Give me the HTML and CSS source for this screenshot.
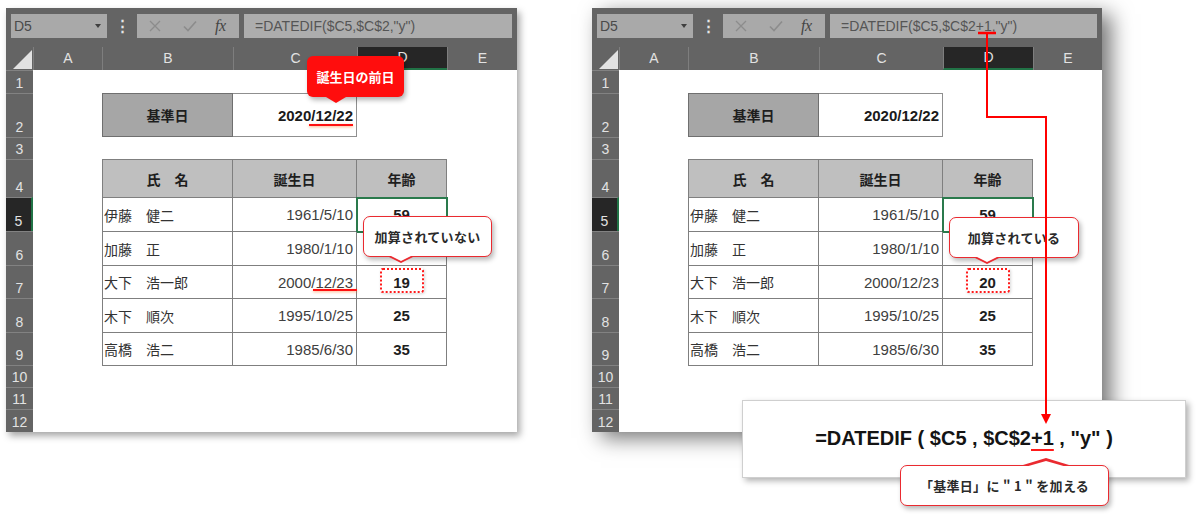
FILE: index.html
```html
<!DOCTYPE html>
<html lang="ja">
<head>
<meta charset="utf-8">
<title>DATEDIF</title>
<link rel="stylesheet" href="styles.css">
</head>
<body>
<div class="page">

  <div class="win left">
    <div class="toolbar">
      <div class="namebox"><span>D5</span><i class="caret"></i></div>
      <div class="dots">⋮</div>
      <div class="fxbtns">
        <svg class="ico-x" width="12" height="12" viewBox="0 0 12 12"><path d="M1 1L11 11M11 1L1 11" stroke="#8c8c8c" stroke-width="1.3" fill="none"/></svg>
        <svg class="ico-ok" width="14" height="12" viewBox="0 0 14 12"><path d="M1 6.5L5 10.5L13 1.5" stroke="#8c8c8c" stroke-width="1.6" fill="none"/></svg>
        <span class="fx">fx</span>
      </div>
      <div class="fbar">=DATEDIF($C5,$C$2,"y")</div>
    </div>
    <div class="colhead">
      <div class="corner"><svg width="19" height="19" viewBox="0 0 19 19"><path d="M19 0V19H0Z" fill="#e2e2e2"/></svg></div>
      <div class="ch ca">A</div>
      <div class="ch cb">B</div>
      <div class="ch cc">C</div>
      <div class="ch cd sel">D</div>
      <div class="ch ce">E</div>
    </div>
    <div class="body">
      <div class="rowheads">
        <div class="rh h23">1</div>
        <div class="rh h44">2</div>
        <div class="rh h22">3</div>
        <div class="rh h38">4</div>
        <div class="rh h34 sel">5</div>
        <div class="rh h34">6</div>
        <div class="rh h33">7</div>
        <div class="rh h34">8</div>
        <div class="rh h33">9</div>
        <div class="rh h22">10</div>
        <div class="rh h22">11</div>
        <div class="rh last">12</div>
      </div>
      <div class="canvas">
        <div class="ref">
          <div class="k">基準日</div>
          <div class="v">2020/12/22</div>
        </div>
        <div class="list">
          <div class="hd">氏　名</div><div class="hd">誕生日</div><div class="hd">年齢</div>
          <div class="nm">伊藤　健二</div><div class="dt">1961/5/10</div><div class="ag cur">59</div>
          <div class="nm">加藤　正</div><div class="dt">1980/1/10</div><div class="ag"></div>
          <div class="nm">大下　浩一郎</div><div class="dt">2000/12/23</div><div class="ag">19</div>
          <div class="nm">木下　順次</div><div class="dt">1995/10/25</div><div class="ag">25</div>
          <div class="nm">高橋　浩二</div><div class="dt">1985/6/30</div><div class="ag">35</div>
        </div>
      </div>
    </div>
    <div class="mark mark-ref"></div>
    <div class="mark mark-dt"></div>
    <div class="dotbox"></div>
    <div class="redtip">誕生日の前日</div>
    <div class="callout c-age">加算されていない</div>
  </div>

  <div class="win right">
    <div class="toolbar">
      <div class="namebox"><span>D5</span><i class="caret"></i></div>
      <div class="dots">⋮</div>
      <div class="fxbtns">
        <svg class="ico-x" width="12" height="12" viewBox="0 0 12 12"><path d="M1 1L11 11M11 1L1 11" stroke="#8c8c8c" stroke-width="1.3" fill="none"/></svg>
        <svg class="ico-ok" width="14" height="12" viewBox="0 0 14 12"><path d="M1 6.5L5 10.5L13 1.5" stroke="#8c8c8c" stroke-width="1.6" fill="none"/></svg>
        <span class="fx">fx</span>
      </div>
      <div class="fbar">=DATEDIF($C5,$C$2+1,"y")</div>
    </div>
    <div class="colhead">
      <div class="corner"><svg width="19" height="19" viewBox="0 0 19 19"><path d="M19 0V19H0Z" fill="#e2e2e2"/></svg></div>
      <div class="ch ca">A</div>
      <div class="ch cb">B</div>
      <div class="ch cc">C</div>
      <div class="ch cd sel">D</div>
      <div class="ch ce">E</div>
    </div>
    <div class="body">
      <div class="rowheads">
        <div class="rh h23">1</div>
        <div class="rh h44">2</div>
        <div class="rh h22">3</div>
        <div class="rh h38">4</div>
        <div class="rh h34 sel">5</div>
        <div class="rh h34">6</div>
        <div class="rh h33">7</div>
        <div class="rh h34">8</div>
        <div class="rh h33">9</div>
        <div class="rh h22">10</div>
        <div class="rh h22">11</div>
        <div class="rh last">12</div>
      </div>
      <div class="canvas">
        <div class="ref">
          <div class="k">基準日</div>
          <div class="v">2020/12/22</div>
        </div>
        <div class="list">
          <div class="hd">氏　名</div><div class="hd">誕生日</div><div class="hd">年齢</div>
          <div class="nm">伊藤　健二</div><div class="dt">1961/5/10</div><div class="ag cur">59</div>
          <div class="nm">加藤　正</div><div class="dt">1980/1/10</div><div class="ag"></div>
          <div class="nm">大下　浩一郎</div><div class="dt">2000/12/23</div><div class="ag">20</div>
          <div class="nm">木下　順次</div><div class="dt">1995/10/25</div><div class="ag">25</div>
          <div class="nm">高橋　浩二</div><div class="dt">1985/6/30</div><div class="ag">35</div>
        </div>
      </div>
    </div>
    <div class="dotbox"></div>
    <div class="callout c-age2">加算されている</div>
  </div>

  <div class="formula"><span>=DATEDIF ( $C5 , $C$2<u>+1</u> , "y" )</span></div>
  <div class="callout c-add">「基準日」に " 1 " を加える</div>

  <svg class="connector" width="1200" height="520" viewBox="0 0 1200 520">
    <path d="M978 33H996" stroke="#ff0000" stroke-width="2.5" fill="none"/>
    <path d="M987 33V117H1046V416" stroke="#ff0000" stroke-width="2" fill="none"/>
    <path d="M1041 414H1051L1046 424Z" fill="#ff0000"/>
  </svg>
</div>
</body>
</html>
```

FILE: styles.css
```css
html, body {
  margin: 0;
  padding: 0;
  background: #ffffff;
}

.page {
  position: relative;
  width: 1200px;
  height: 520px;
  box-sizing: border-box;
  padding: 8px 0 0 6px;
  display: flex;
  align-items: flex-start;
  gap: 75px;
  overflow: hidden;
  font-family: "Liberation Sans", "Noto Sans CJK JP", sans-serif;
}

.win {
  position: relative;
  width: 511px;
  height: 424px;
  background: #646464;
  display: flex;
  flex-direction: column;
}
.win.left {
  box-shadow: 3px 4px 7px rgba(0, 0, 0, 0.35);
}
.win.right {
  width: 510px;
  box-shadow: 9px 6px 20px rgba(0, 0, 0, 0.55);
}

/* toolbar */
.toolbar {
  height: 39px;
  box-sizing: border-box;
  padding: 6px 5px 9px 5px;
  display: flex;
}
.namebox {
  width: 96px;
  background: #a9a9a9;
  box-sizing: border-box;
  padding: 0 6px 0 3px;
  display: flex;
  align-items: center;
  justify-content: space-between;
  font-size: 14px;
  color: #4a4a4a;
}
.caret {
  width: 0;
  height: 0;
  border-left: 3.5px solid transparent;
  border-right: 3.5px solid transparent;
  border-top: 4px solid #3f3f3f;
}
.dots {
  width: 30px;
  display: flex;
  align-items: center;
  justify-content: center;
  color: #e6e6e6;
  font-size: 15px;
  font-weight: bold;
}
.fxbtns {
  width: 102px;
  background: #a9a9a9;
  box-sizing: border-box;
  padding-left: 12px;
  display: flex;
  align-items: center;
}
.ico-ok {
  margin-left: 22px;
}
.fx {
  margin-left: 18px;
  font-family: "Liberation Serif", serif;
  font-style: italic;
  font-size: 16px;
  color: #444444;
  letter-spacing: -0.5px;
}
.fbar {
  flex: 1;
  margin-left: 5px;
  background: #adadad;
  padding-left: 11px;
  line-height: 24px;
  font-size: 14px;
  color: #555555;
  white-space: nowrap;
}

/* column header */
.colhead {
  height: 23px;
  display: flex;
}
.corner {
  width: 27px;
  box-sizing: border-box;
  padding: 0 1px 1px 0;
  display: flex;
  align-items: flex-end;
  justify-content: flex-end;
}
.ch {
  box-sizing: border-box;
  border-left: 1px solid #7e7e7e;
  text-align: center;
  line-height: 23px;
  font-size: 14px;
  color: #e2e2e2;
}
.ca { width: 69px; }
.cb { width: 131px; }
.cc { width: 124px; }
.cd { width: 90px; }
.ce { flex: 1; }
.ch.sel {
  background: #262626;
  border-bottom: 2px solid #217346;
  line-height: 21px;
}

/* body */
.body {
  flex: 1;
  display: flex;
  min-height: 0;
}
.rowheads {
  width: 27px;
  display: flex;
  flex-direction: column;
}
.rh {
  box-sizing: border-box;
  border-top: 1px solid #828282;
  display: flex;
  align-items: flex-end;
  justify-content: center;
  padding-bottom: 2px;
  font-size: 14px;
  color: #e2e2e2;
}
.h22 { height: 22px; }
.h23 { height: 23px; }
.h33 { height: 33px; }
.h34 { height: 34px; }
.h38 { height: 38px; }
.h44 { height: 44px; }
.rh.last { flex: 1; }
.rh.sel {
  background: #262626;
  border-right: 2px solid #217346;
}

.canvas {
  flex: 1;
  background: #ffffff;
  box-sizing: border-box;
  padding: 23px 0 0 69px;
}

.ref {
  display: grid;
  grid-template-columns: 131px 124px;
  height: 44px;
}
.ref .k {
  background: #a6a6a6;
  border: 1px solid #6f6f6f;
  display: flex;
  align-items: center;
  justify-content: center;
  font-weight: bold;
  font-size: 14px;
  color: #1e1e1e;
}
.ref .v {
  border: 1px solid #8f8f8f;
  border-left: none;
  display: flex;
  align-items: center;
  justify-content: flex-end;
  padding-right: 3px;
  font-weight: bold;
  font-size: 15px;
  color: #1a1a1a;
}

.list {
  margin-top: 22px;
  display: grid;
  grid-template-columns: 130px 124px 90px;
  grid-template-rows: 38px 34px 34px 33px 34px 33px;
  border-top: 1px solid #7f7f7f;
  border-left: 1px solid #7f7f7f;
  width: max-content;
}
.list > div {
  border-right: 1px solid #7f7f7f;
  border-bottom: 1px solid #7f7f7f;
  display: flex;
  align-items: center;
  white-space: nowrap;
}
.list .hd {
  background: #bfbfbf;
  justify-content: center;
  font-weight: bold;
  font-size: 14px;
  color: #1e1e1e;
}
.list .nm {
  padding-left: 1px;
  font-size: 14px;
  color: #333333;
}
.list .dt {
  justify-content: flex-end;
  padding-right: 3px;
  font-size: 15px;
  color: #404040;
}
.list .ag {
  justify-content: center;
  font-weight: bold;
  font-size: 15px;
  color: #1e1e1e;
}
.list .cur {
  outline: 2px solid #2a7a4c;
  outline-offset: -1px;
}

/* annotations */
.mark {
  position: absolute;
  height: 2px;
  background: #ff1010;
  box-shadow: 0 1px 3px rgba(255, 120, 40, 0.6);
}
.mark-ref {
  left: 303px;
  top: 116px;
  width: 44px;
}
.mark-dt {
  left: 307px;
  top: 281px;
  width: 44px;
}

.dotbox {
  position: absolute;
  left: 374px;
  top: 260px;
  width: 44px;
  height: 25px;
  box-sizing: border-box;
  border: 2px dotted #ff1a1a;
  border-radius: 3px;
  box-shadow: 1px 1px 3px rgba(0, 0, 0, 0.15);
}

.redtip {
  position: absolute;
  left: 301px;
  top: 48px;
  width: 97px;
  height: 41px;
  background: #ff0d0d;
  border-radius: 6px;
  box-shadow: 2px 3px 5px rgba(0, 0, 0, 0.3);
  display: flex;
  align-items: center;
  justify-content: center;
  font-family: "Noto Sans CJK JP", sans-serif;
  font-weight: bold;
  font-size: 13px;
  color: #ffffff;
}
.redtip::after {
  content: "";
  position: absolute;
  left: 19px;
  bottom: -6px;
  border-left: 10px solid transparent;
  border-right: 10px solid transparent;
  border-top: 6px solid #ff0d0d;
}

.callout {
  position: absolute;
  background: #ffffff;
  box-sizing: border-box;
  border: 1.5px solid #ea2a30;
  border-radius: 7px;
  box-shadow: 2px 3px 5px rgba(0, 0, 0, 0.28);
  display: flex;
  align-items: center;
  justify-content: center;
  font-family: "Noto Sans CJK JP", sans-serif;
  font-weight: bold;
  font-size: 13px;
  letter-spacing: 0.3px;
  color: #2a2a2a;
  white-space: nowrap;
}
.callout::before,
.callout::after {
  content: "";
  position: absolute;
  width: 0;
  height: 0;
}
.c-age {
  left: 357px;
  top: 208px;
  width: 129px;
  height: 41px;
}
.c-age2 {
  left: 357px;
  top: 209px;
  width: 130px;
  height: 41px;
}
.c-age::before,
.c-age2::before {
  left: 25px;
  bottom: -7px;
  border-left: 12px solid transparent;
  border-right: 12px solid transparent;
  border-top: 6px solid #ea2a30;
}
.c-age::after,
.c-age2::after {
  left: 27px;
  bottom: -4.5px;
  border-left: 10px solid transparent;
  border-right: 10px solid transparent;
  border-top: 5px solid #ffffff;
}
.c-add {
  left: 900px;
  top: 465px;
  width: 209px;
  height: 41px;
  z-index: 2;
}
.c-add::before {
  left: 122px;
  top: -8px;
  border-left: 23px solid transparent;
  border-right: 23px solid transparent;
  border-bottom: 7px solid #ea2a30;
}
.c-add::after {
  left: 124px;
  top: -5.5px;
  border-left: 21px solid transparent;
  border-right: 21px solid transparent;
  border-bottom: 6px solid #ffffff;
}

.formula {
  position: absolute;
  left: 742px;
  top: 400px;
  width: 444px;
  height: 78px;
  box-sizing: border-box;
  background: #ffffff;
  border: 1px solid #cfcfcf;
  box-shadow: 3px 3px 6px rgba(0, 0, 0, 0.3);
  display: flex;
  align-items: center;
  justify-content: center;
  padding-bottom: 2px;
  font-family: "Liberation Sans", sans-serif;
  font-weight: bold;
  font-size: 20px;
  color: #141414;
  white-space: pre;
  z-index: 1;
}
.formula u {
  text-decoration: underline;
  text-decoration-color: #ff1a1a;
  text-decoration-thickness: 2px;
  text-underline-offset: 4px;
}

.connector {
  position: absolute;
  left: 0;
  top: 0;
  pointer-events: none;
  z-index: 3;
}
```
